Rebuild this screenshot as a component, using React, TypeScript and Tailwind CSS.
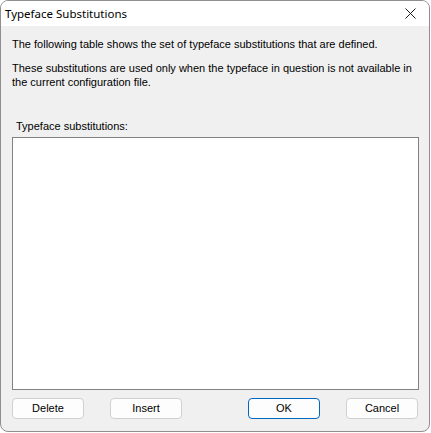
import React from "react";

export default function App() {
  const body = { fontFamily: '"Liberation Sans", Arial, sans-serif' };
  const title = { fontFamily: '"Noto Sans", "Open Sans", sans-serif' };
  const btn =
    "w-[72px] h-[21px] rounded-[4px] border bg-[#fdfdfd] text-[11px] text-black flex items-center justify-center";
  return (
    <div className="w-[431px] h-[433px] bg-white">
      <div className="w-[430px] h-[432px] rounded-[8px] border border-[#8f8f8f] bg-[#f0f0f0] overflow-hidden flex flex-col">
        <div className="h-[25px] bg-white flex items-center justify-between pl-[4px] pr-[13px] shrink-0">
          <span className="text-[11.5px] text-black" style={title}>
            Typeface Substitutions
          </span>
          <svg width="11" height="11" viewBox="0 0 11 11">
            <path d="M0.5 0.5 L10.5 10.5 M10.5 0.5 L0.5 10.5" stroke="#1a1a1a" strokeWidth="1" />
          </svg>
        </div>
        <div className="flex flex-col flex-1 px-[11px] text-[11px] text-black" style={body}>
          <p className="mt-[11px] leading-[14px]">
            The following table shows the set of typeface substitutions that are defined.
          </p>
          <p className="mt-[10px] leading-[14px]">
            These substitutions are used only when the typeface in question is not available in
            <br />
            the current configuration file.
          </p>
          <p className="mt-[30px] ml-[4px] leading-[14px]">Typeface substitutions:</p>
          <div className="mt-[4px] w-[407px] h-[253px] bg-white border border-[#828282]" />
          <div className="mt-[8px] flex">
            <div className={btn + " border-[#d0d0d0]"}>Delete</div>
            <div className={btn + " border-[#d0d0d0] ml-[26px]"}>Insert</div>
            <div className={btn + " border-[#0067c0] ml-[66px]"}>OK</div>
            <div className={btn + " border-[#d0d0d0] ml-[26px]"}>Cancel</div>
          </div>
        </div>
      </div>
    </div>
  );
}
